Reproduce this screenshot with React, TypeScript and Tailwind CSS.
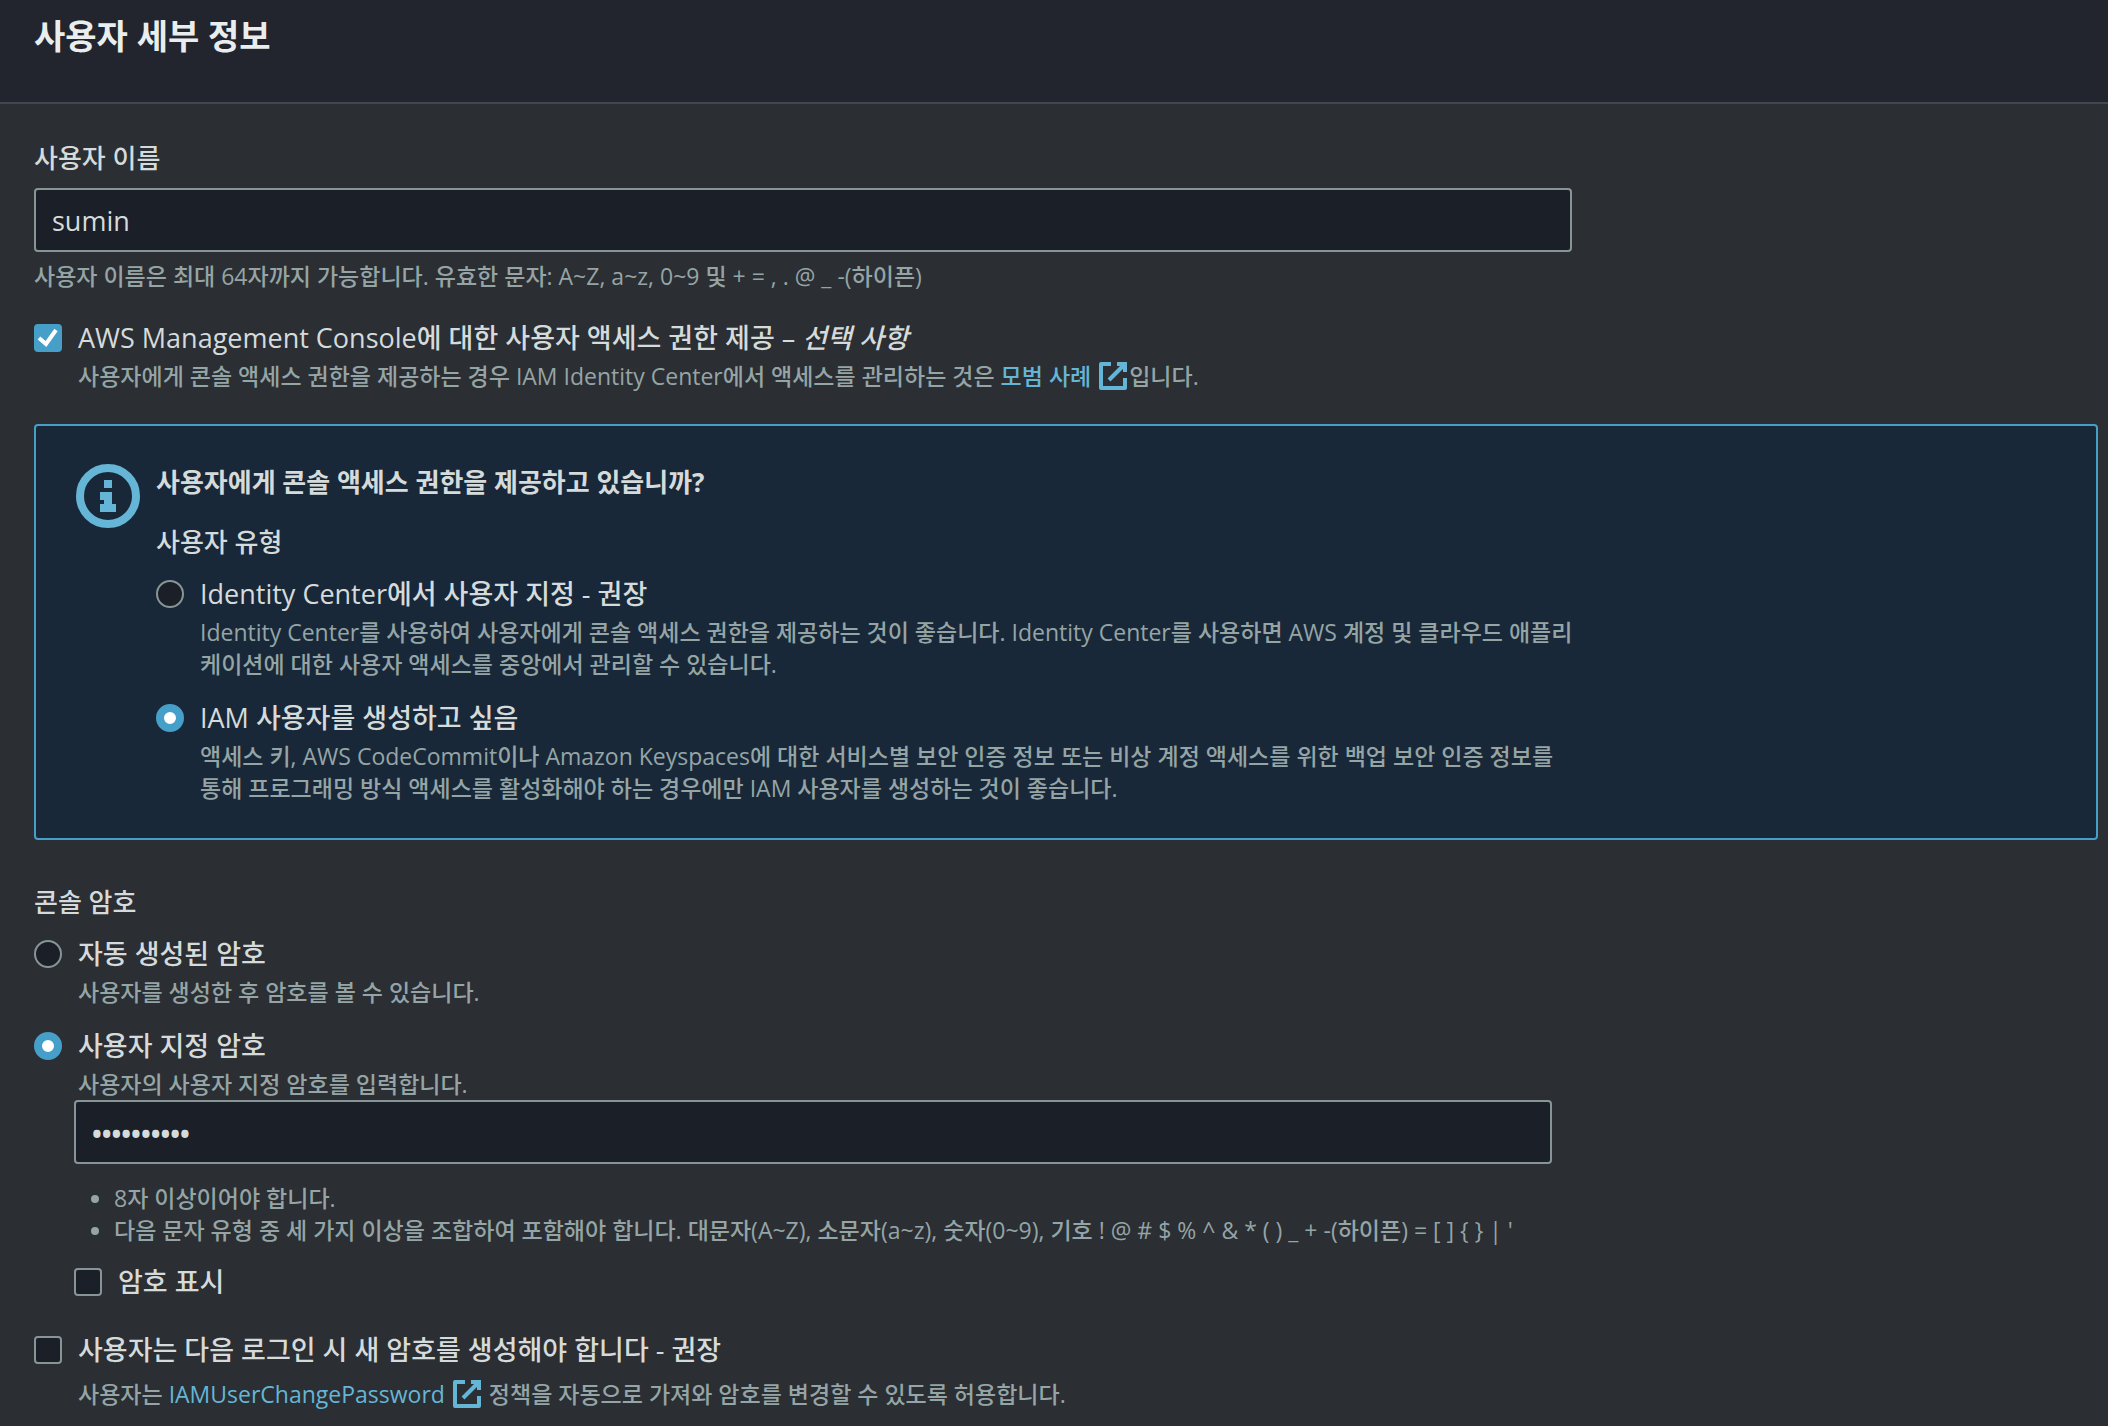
import { useId, useState } from "react"
import type { InputHTMLAttributes, ReactNode } from "react"

interface ChoiceProps {
  type: "checkbox" | "radio"
  name?: string
  label: ReactNode
  checked: boolean
  onChange: () => void
  children?: ReactNode
}

const controlStyles = {
  checkbox: "rounded-sm border-2 border-[#879596] bg-[#1b1f28] checked:border-[#469fc8] checked:bg-[#469fc8]",
  radio: "rounded-full border-2 border-[#879596] bg-[#1b1f28] checked:border-8 checked:border-[#469fc8] checked:bg-white",
}

function Choice({ type, name, label, checked, onChange, children }: ChoiceProps) {
  const id = useId()

  return (
    <div className="flex items-start gap-4">
      <span className="mt-2 grid size-7 shrink-0">
        <input
          id={id}
          type={type}
          name={name}
          checked={checked}
          onChange={onChange}
          className={`col-start-1 row-start-1 size-7 appearance-none ${controlStyles[type]}`}
        />
        {type === "checkbox" && checked && (
          <svg viewBox="0 0 28 28" className="pointer-events-none col-start-1 row-start-1 size-7" fill="none" stroke="white" strokeWidth="4">
            <polyline points="5,14 12,20 22,6" />
          </svg>
        )}
      </span>
      <div className="min-w-0 flex-1">
        <label htmlFor={id} className="block text-[27px] leading-[44px] text-[#d5dbdb]">
          {label}
        </label>
        {children}
      </div>
    </div>
  )
}

function Description({ children }: { children: ReactNode }) {
  return <p className="text-[23px] leading-8 break-all text-[#95a5a6]">{children}</p>
}

function TextInput(props: InputHTMLAttributes<HTMLInputElement>) {
  return (
    <input
      {...props}
      className={`block h-16 w-full rounded-sm border-2 border-[#879596] bg-[#1b1f28] px-4 text-[#d5dbdb] ${
        props.type === "password" ? "pt-1 text-[26px] font-bold" : "text-[27px]"
      }`}
    />
  )
}

function ExternalLink({ children }: { children: ReactNode }) {
  return (
    <a href="#" className="text-[#65b6d6]">
      {children}{" "}
      <svg viewBox="0 0 16 16" className="-my-2 inline size-8 align-[1px]" fill="none" stroke="currentColor" strokeWidth="2">
        <path d="M10 2h4v4" />
        <path d="M6 10l8-8" />
        <path d="M14 9.048V14H2V2h5" strokeLinejoin="round" />
      </svg>
    </a>
  )
}

function InfoIcon() {
  return (
    <svg viewBox="0 0 16 16" className="size-16 shrink-0" fill="none" stroke="#65b6d6" strokeWidth="2">
      <circle cx="8" cy="8" r="7" />
      <path d="M8 4v2M6 8h2v3M6 11h4" />
    </svg>
  )
}

export default function App() {
  const [userName, setUserName] = useState("sumin")
  const [password, setPassword] = useState("abcdefghij")
  const [consoleAccess, setConsoleAccess] = useState(true)
  const [userType, setUserType] = useState("iam")
  const [passwordType, setPasswordType] = useState("custom")
  const [showPassword, setShowPassword] = useState(false)
  const [mustReset, setMustReset] = useState(false)

  return (
    <div
      lang="ko"
      className="min-h-screen bg-[#2b2e33] font-['Open_Sans','Noto_Sans_CJK_KR',sans-serif] text-[26px] leading-[44px] font-medium text-[#d5dbdb]"
    >
      <header className="border-b-2 border-[#414750] bg-[#22252d] px-[34px] pt-[14px] pb-11">
        <h2 className="text-[34px] leading-[44px] font-bold text-[#eaeded]">사용자 세부 정보</h2>
      </header>

      <main className="pt-8 pr-[10px] pb-2 pl-[34px]">
        <div className="max-w-[1538px]">
          <label htmlFor="user-name" className="mb-2 block">사용자 이름</label>
          <TextInput id="user-name" type="text" value={userName} onChange={(e) => setUserName(e.target.value)} />
          <div className="mt-2">
            <Description>사용자 이름은 최대 64자까지 가능합니다. 유효한 문자: A~Z, a~z, 0~9 및 + = , . @ _ -(하이픈)</Description>
          </div>
        </div>

        <div className="mt-6">
          <Choice
            type="checkbox"
            label={<>AWS Management Console에 대한 사용자 액세스 권한 제공 – <i>선택 사항</i></>}
            checked={consoleAccess}
            onChange={() => setConsoleAccess(!consoleAccess)}
          >
            <Description>
              사용자에게 콘솔 액세스 권한을 제공하는 경우 IAM Identity Center에서 액세스를 관리하는 것은{" "}
              <ExternalLink>모범 사례</ExternalLink>입니다.
            </Description>
          </Choice>
        </div>

        <section className="mt-8 flex items-start gap-4 rounded-sm border-2 border-[#469fc8] bg-[#192838] px-10 pt-[34px] pb-[34px]">
          <div className="mt-1 flex">
            <InfoIcon />
          </div>
          <div className="max-w-[1424px] flex-1">
            <h3 className="font-bold">사용자에게 콘솔 액세스 권한을 제공하고 있습니까?</h3>
            <fieldset className="mt-4">
              <legend className="mb-2">사용자 유형</legend>
              <div className="flex flex-col gap-4">
                <Choice
                  type="radio"
                  name="user-type"
                  label="Identity Center에서 사용자 지정 - 권장"
                  checked={userType === "identity-center"}
                  onChange={() => setUserType("identity-center")}
                >
                  <Description>
                    Identity Center를 사용하여 사용자에게 콘솔 액세스 권한을 제공하는 것이 좋습니다. Identity Center를 사용하면 AWS 계정 및 클라우드 애플리케이션에 대한 사용자 액세스를 중앙에서 관리할 수 있습니다.
                  </Description>
                </Choice>
                <Choice
                  type="radio"
                  name="user-type"
                  label="IAM 사용자를 생성하고 싶음"
                  checked={userType === "iam"}
                  onChange={() => setUserType("iam")}
                >
                  <Description>
                    액세스 키, AWS CodeCommit이나 Amazon Keyspaces에 대한 서비스별 보안 인증 정보 또는 비상 계정 액세스를 위한 백업 보안 인증 정보를 통해 프로그래밍 방식 액세스를 활성화해야 하는 경우에만 IAM 사용자를 생성하는 것이 좋습니다.
                  </Description>
                </Choice>
              </div>
            </fieldset>
          </div>
        </section>

        <fieldset className="mt-10">
          <legend className="mb-2">콘솔 암호</legend>
          <div className="flex flex-col gap-4">
            <Choice
              type="radio"
              name="password-type"
              label="자동 생성된 암호"
              checked={passwordType === "auto"}
              onChange={() => setPasswordType("auto")}
            >
              <Description>사용자를 생성한 후 암호를 볼 수 있습니다.</Description>
            </Choice>
            <Choice
              type="radio"
              name="password-type"
              label="사용자 지정 암호"
              checked={passwordType === "custom"}
              onChange={() => setPasswordType("custom")}
            >
              <Description>사용자의 사용자 지정 암호를 입력합니다.</Description>
            </Choice>
          </div>
        </fieldset>

        <div className="ml-10 max-w-[1478px]">
          <TextInput
            type={showPassword ? "text" : "password"}
            aria-label="사용자 지정 암호"
            value={password}
            onChange={(e) => setPassword(e.target.value)}
          />
          <ul className="mt-[18px] mb-[14px] list-disc pl-10 text-[23px] leading-8 text-[#95a5a6]">
            <li>8자 이상이어야 합니다.</li>
            <li>다음 문자 유형 중 세 가지 이상을 조합하여 포함해야 합니다. 대문자(A~Z), 소문자(a~z), 숫자(0~9), 기호 ! @ # $ % ^ &amp; * ( ) _ + -(하이픈) = [ ] {"{ }"} | '</li>
          </ul>
          <Choice
            type="checkbox"
            label="암호 표시"
            checked={showPassword}
            onChange={() => setShowPassword(!showPassword)}
          />
        </div>

        <div className="mt-6">
          <Choice
            type="checkbox"
            label="사용자는 다음 로그인 시 새 암호를 생성해야 합니다 - 권장"
            checked={mustReset}
            onChange={() => setMustReset(!mustReset)}
          >
            <p className="text-[23px] leading-[44px] text-[#95a5a6]">
              사용자는 <ExternalLink>IAMUserChangePassword</ExternalLink> 정책을 자동으로 가져와 암호를 변경할 수 있도록 허용합니다.
            </p>
          </Choice>
        </div>
      </main>
    </div>
  )
}
